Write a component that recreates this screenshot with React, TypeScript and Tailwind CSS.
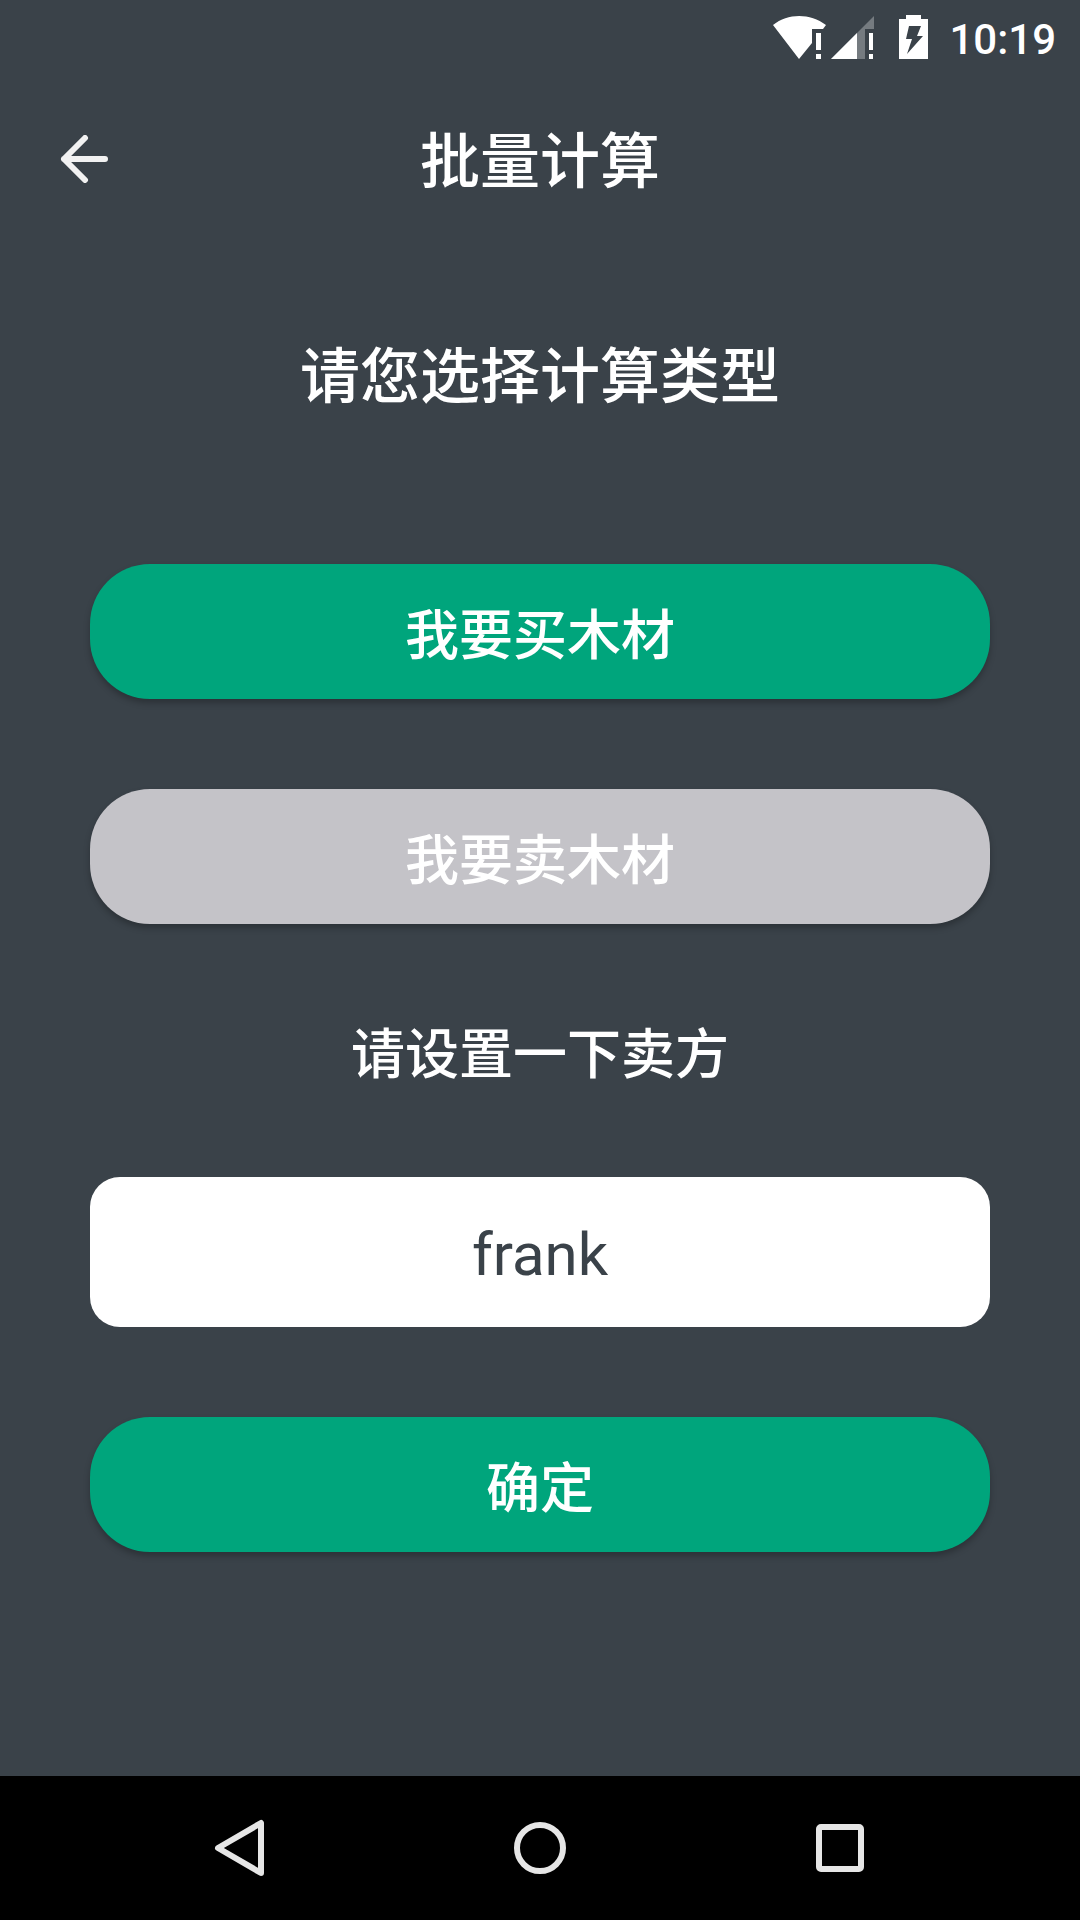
import React from "react";

const pill =
  "h-[135px] w-full rounded-[60px] pt-2.5 text-[54px] leading-[60px] font-medium text-white shadow-[0_4px_6px_rgba(0,0,0,0.25)]";

function StatusBar() {
  return (
    <div className="flex h-[72px] items-center justify-end pr-6 text-white">
      <svg className="h-[72px] w-[58px]" viewBox="0 0 58 72" fill="currentColor" aria-label="Wi-Fi">
        <path d="M1 25C16 13 38 13 54 25L51 29H40V43L27 59Z" />
        <path d="M44 33h5v17h-5zM44 54h5v5h-5z" />
      </svg>
      <svg className="h-[72px] w-[48px]" viewBox="0 0 48 72" fill="currentColor" aria-label="Signal">
        <path d="M44 16V29H35V59H1Z" opacity="0.3" />
        <path d="M27 33V59H1Z" />
        <path d="M39 33h4v17h-4zM39 54h4v5h-4z" />
      </svg>
      <svg className="ml-5 h-[72px] w-[30px]" viewBox="0 0 30 72" fill="currentColor" aria-label="Battery">
        <path fillRule="evenodd" d="M8 15h15v4h7v40H1V19h7zM11 26L8 39h6L9 54L25 36h-6L23 26z" />
      </svg>
      <span className="ml-[21px] pt-2 text-[42px] leading-[72px] font-medium">10:19</span>
    </div>
  );
}

export default function App() {
  return (
    <div className="flex min-h-screen flex-col bg-[#3a4249] font-['Roboto','Noto_Sans_CJK_SC',sans-serif] text-white">
      <StatusBar />
      <header className="grid h-[174px] grid-cols-[168px_1fr_168px] items-center">
        <button type="button" aria-label="返回" className="flex h-full items-center justify-center">
          <svg className="h-12 w-12" viewBox="0 0 48 48" fill="none" stroke="#f2f2f2" strokeWidth="6" strokeLinecap="round" strokeLinejoin="round">
            <path d="M25 3L4 24L25 45M4 24H45" />
          </svg>
        </button>
        <h1 className="pt-2 text-center text-[60px] leading-[72px] font-medium">批量计算</h1>
      </header>
      <main className="flex grow flex-col items-center px-[90px]">
        <h2 className="mt-24 text-[60px] leading-[72px] font-medium">请您选择计算类型</h2>
        <button type="button" className={pill + " mt-[150px] bg-[#00a57c]"}>我要买木材</button>
        <button type="button" className={pill + " mt-[90px] bg-[#c4c3c8]"}>我要卖木材</button>
        <label htmlFor="seller" className="mt-24 text-[54px] leading-[72px] font-medium">请设置一下卖方</label>
        <input id="seller" defaultValue="frank" className="mt-[85px] h-[150px] w-full rounded-[30px] bg-white pt-1 text-center text-[60px] text-[#3a4249]" />
        <button type="button" className={pill + " mt-[90px] bg-[#00a57c]"}>确定</button>
      </main>
      <nav className="flex h-36 justify-center bg-black">
        <button type="button" aria-label="Back" className="flex w-[300px] items-center justify-center">
          <svg className="h-[60px] w-[60px]" viewBox="0 0 60 60" fill="none" stroke="#e6e6e6" strokeWidth="6" strokeLinejoin="round"><path d="M51 5V55L8 30Z" /></svg>
        </button>
        <button type="button" aria-label="Home" className="flex w-[300px] items-center justify-center">
          <svg className="h-[60px] w-[60px]" viewBox="0 0 60 60" fill="none" stroke="#e6e6e6" strokeWidth="6"><circle cx="30" cy="30" r="23" /></svg>
        </button>
        <button type="button" aria-label="Recents" className="flex w-[300px] items-center justify-center">
          <svg className="h-[60px] w-[60px]" viewBox="0 0 60 60" fill="none" stroke="#e6e6e6" strokeWidth="6"><rect x="9" y="9" width="42" height="42" rx="2" /></svg>
        </button>
      </nav>
    </div>
  );
}
